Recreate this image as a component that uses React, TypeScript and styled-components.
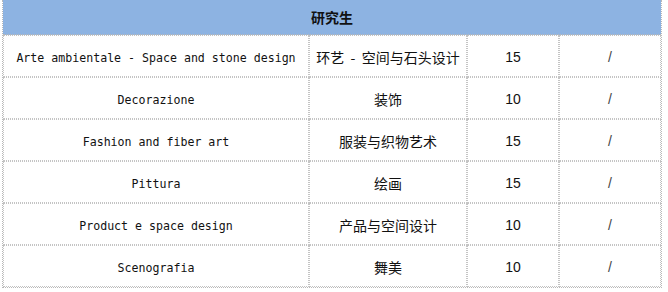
import styled, { createGlobalStyle } from "styled-components";

const GlobalStyle = createGlobalStyle`
  body {
    margin: 0;
    background: #ffffff;
    font-family: "Liberation Sans", "Noto Sans CJK SC", sans-serif;
  }
`;

const Page = styled.div`
  padding: 0 6px 0 2px;
`;

const Table = styled.table`
  width: 660px;
  border-collapse: separate;
  border-spacing: 0;
  border: 1px dotted #b8b8b8;
  border-top: none;
  table-layout: fixed;
`;

const Col = styled.col<{ $w?: number }>`
  width: ${(p) => (p.$w ? `${p.$w}px` : "auto")};
`;

const HeadCell = styled.th`
  height: 34px;
  padding: 0;
  background: #8db3e2;
  color: #111;
  font-family: "Noto Sans CJK SC", sans-serif;
  font-weight: 700;
  font-size: 14px;
  text-align: center;
  border-bottom: 1px dotted #b8b8b8;
`;

type Kind = "mono" | "cjk" | "num" | "slash";

const Cell = styled.td<{ $kind: Kind }>`
  height: ${(p) => (p.$kind === "mono" ? "36px" : "38px")};
  padding: ${(p) => (p.$kind === "mono" ? "4px 0 0" : "2px 0 0")};
  text-align: center;
  line-height: 20px;
  color: ${(p) => (p.$kind === "slash" ? "#444" : "#111")};
  border: 1px dotted #c4c4c4;
  white-space: pre;
  font-family: ${(p) =>
    p.$kind === "mono"
      ? `"DejaVu Sans Mono", monospace`
      : p.$kind === "cjk"
      ? `"Noto Sans CJK SC", sans-serif`
      : `"Liberation Sans", sans-serif`};
  font-size: ${(p) => (p.$kind === "mono" ? "11.6px" : "14px")};
  font-weight: ${(p) => (p.$kind === "slash" ? 300 : 400)};
`;

const rows = [
  ["Arte ambientale - Space and stone design", "环艺  -  空间与石头设计", "15", "/"],
  ["Decorazione", "装饰", "10", "/"],
  ["Fashion and fiber art", "服装与织物艺术", "15", "/"],
  ["Pittura", "绘画", "15", "/"],
  ["Product e space design", "产品与空间设计", "10", "/"],
  ["Scenografia", "舞美", "10", "/"],
];

const kinds: Kind[] = ["mono", "cjk", "num", "slash"];

export default function App() {
  return (
    <Page>
      <GlobalStyle />
      <Table>
        <colgroup>
          <Col $w={306} />
          <Col $w={158} />
          <Col $w={92} />
          <Col />
        </colgroup>
        <thead>
          <tr>
            <HeadCell colSpan={4}>研究生</HeadCell>
          </tr>
        </thead>
        <tbody>
          {rows.map((r) => (
            <tr key={r[0]}>
              {r.map((text, i) => (
                <Cell key={i} $kind={kinds[i]}>
                  {text}
                </Cell>
              ))}
            </tr>
          ))}
        </tbody>
      </Table>
    </Page>
  );
}
